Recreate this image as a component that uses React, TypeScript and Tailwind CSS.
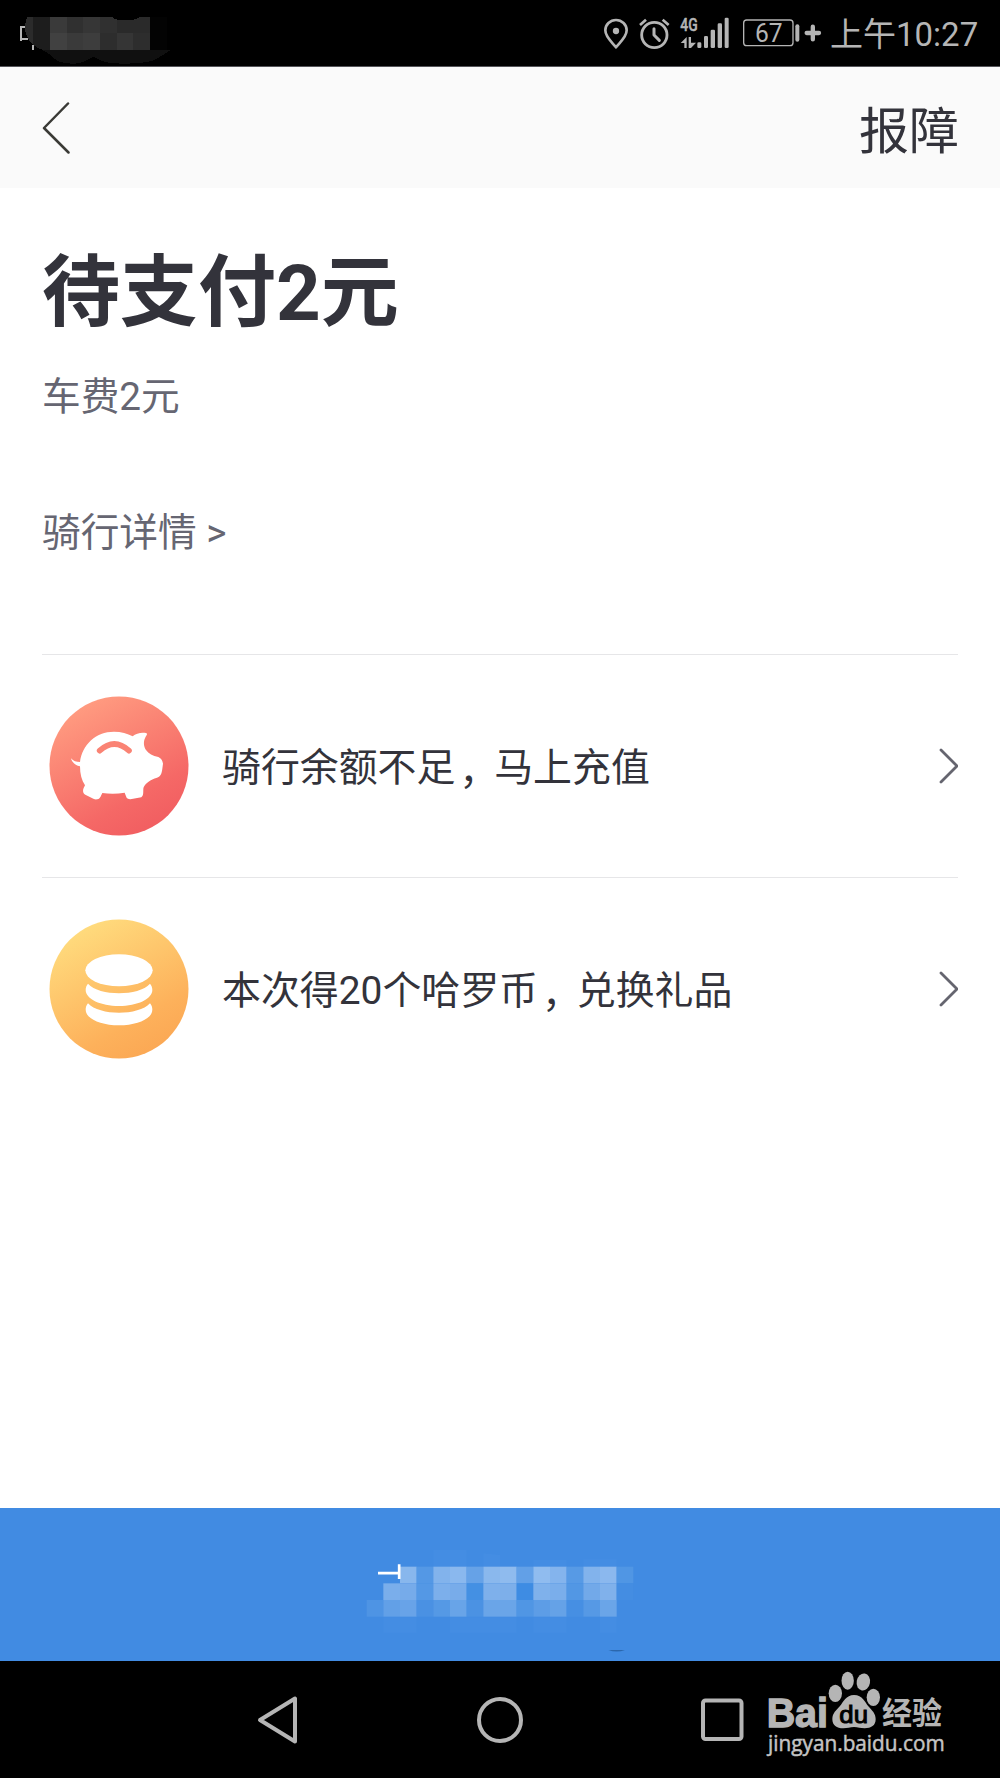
import React from 'react';

type Cell = [number, number, string];

// [column, row, colour] of the masked button label
const maskCells: Cell[] = [
  [0, 2, '#4e94e4'],
  [1, 1, '#7aaeeb'], [1, 2, '#62a0e7'],
  [2, 0, '#88b7ed'], [2, 1, '#76abea'], [2, 2, '#68a3e8'],
  [3, 0, '#5498e5'], [3, 1, '#5498e5'], [3, 2, '#4a91e3'],
  [4, 0, '#82b3ec'], [4, 1, '#7cafeb'], [4, 2, '#5599e5'],
  [5, 0, '#8ab8ee'], [5, 1, '#78acea'], [5, 2, '#68a4e8'],
  [6, 0, '#66a2e7'], [6, 1, '#4490e3'], [6, 2, '#4b92e3'],
  [7, 0, '#8ab8ed'], [7, 1, '#7eb0eb'], [7, 2, '#6aa5e8'],
  [8, 0, '#8fbbee'], [8, 1, '#7dafea'], [8, 2, '#6aa5e8'],
  [9, 0, '#62a0e7'], [9, 1, '#3e8ce3'], [9, 2, '#5096e4'],
  [10, 0, '#90bcef'], [10, 1, '#7fb1eb'], [10, 2, '#5d9de6'],
  [11, 0, '#84b4ed'], [11, 1, '#7aaeeb'], [11, 2, '#65a2e7'],
  [12, 0, '#579ae5'], [12, 1, '#5297e4'], [12, 2, '#468fe3'],
  [13, 0, '#82b3ec'], [13, 1, '#72a9e9'], [13, 2, '#5699e5'],
  [14, 0, '#8bb8ee'], [14, 1, '#80b1eb'], [14, 2, '#6aa5e8'],
  [15, 0, '#5096e4'], [15, 1, '#448de2'],
];

const CarrierMask = () => (
  <svg className="h-[66px] w-[180px]" viewBox="0 0 540 198" shapeRendering="crispEdges">
    <path d="M64 124V80h14M64 117h20M100 134v16" fill="none" stroke="#b5b5b5" strokeWidth="6" />
    <path d="M128 150h384q-45 30-60 34q-60 12-127 4q-30-8-45-18q-20 13-40 19q-35 6-65-5q-15-8-25-20z" fill="#101010" />
    <path d="M84 50h16v84q-25-22-25-54q1-20 9-30z" fill="#2b2b2b" />
    <path d="M100 50h50v100h-22q-20-8-28-16z" fill="#1d1d1d" />
    <path d="M150 50h50v50h-50z" fill="#3a3a3a" />
    <path d="M200 50h50v50h-50z" fill="#303030" />
    <path d="M250 50h50v50h-50z" fill="#363636" />
    <path d="M300 50h34q8 8 22 10h44v40H300z" fill="#303030" />
    <path d="M350 59h50q12-1 20-9h30v50H350z" fill="#2a2a2a" />
    <path d="M150 100h50v50h-50z" fill="#414141" />
    <path d="M200 100h50v50h-50z" fill="#3a3a3a" />
    <path d="M250 100h50v50h-50z" fill="#3d3d3d" />
    <path d="M300 100h50v50h-50z" fill="#2d2d2d" />
    <path d="M350 100h50v50h-50z" fill="#353535" />
    <path d="M400 100h50v50h-50z" fill="#2d2d2d" />
    <path d="M450 50h50v100h-50z" fill="#030303" />
  </svg>
);

const StatusIcons = () => (
  <svg className="h-[66px] w-[240px]" viewBox="0 0 720 198" fill="none" stroke="#b5b5b5">
    {/* location */}
    <path d="M78 142C68 128 46 112 46 91a32 31 0 0 1 64 0c0 21-22 37-32 51z" strokeWidth="8" strokeLinejoin="round" />
    <circle cx="78" cy="93" r="9.5" fill="#b5b5b5" stroke="none" />
    {/* alarm */}
    <circle cx="193" cy="105" r="38" strokeWidth="8.5" />
    <path d="M192 86v19l16 16" strokeWidth="9" strokeLinecap="round" strokeLinejoin="round" />
    <path d="M150 75l18-16M236 75l-18-16" strokeWidth="8" />
    {/* network */}
    <text x="271" y="94" fontSize="57" textLength="52" lengthAdjust="spacingAndGlyphs" fill="#b5b5b5" stroke="#b5b5b5" strokeWidth="1.5" className="font-['Roboto',sans-serif] font-medium">4G</text>
    <g fill="#b5b5b5" stroke="none">
      <path d="M272 129l18-18v33h-7v-15zM296 111h7v17h15l-15 16h-7z" />
      <rect x="322" y="127" width="12" height="17" rx="4" />
      <rect x="342" y="108" width="12" height="36" rx="4" />
      <rect x="362" y="89" width="13" height="55" rx="4" />
      <rect x="383" y="70" width="13" height="74" rx="4" />
      <rect x="404" y="53" width="12" height="91" rx="4" />
    </g>
    {/* battery */}
    <rect x="461" y="60" width="148" height="77" rx="9" strokeWidth="4" />
    <text x="495" y="125" fontSize="75" textLength="83" lengthAdjust="spacingAndGlyphs" fill="#b5b5b5" stroke="none" className="font-['Roboto',sans-serif]">67</text>
    <path d="M622 79v40" strokeWidth="12" strokeLinecap="round" />
    <path d="M650 99h37M668.500 80v38" strokeWidth="13" strokeLinecap="round" />
  </svg>
);

const StatusBar = () => (
  <div className="flex h-[66px] items-center justify-between bg-black">
    <CarrierMask />
    <div className="flex h-[66px] items-center">
      <StatusIcons />
      <span className="mr-[22px] w-[148px] pt-1 text-[33px] leading-[66px] whitespace-nowrap text-[#b5b5b5]">上午10:27</span>
    </div>
  </div>
);

const PiggyIcon = () => (
  <svg className="h-[140px] w-[140px] shrink-0" viewBox="0 0 420 420">
    <defs>
      <linearGradient id="coral" x1="0.2" y1="0.08" x2="0.7" y2="0.98">
        <stop offset="0" stopColor="#ff9b80" />
        <stop offset="0.75" stopColor="#f56866" />
        <stop offset="1" stopColor="#f15e61" />
      </linearGradient>
    </defs>
    <circle cx="210" cy="210" r="208.500" fill="url(#coral)" />
    <path
      d="M66 187c7 9 16 11 27 11c6-51 47-91 102-91c22 0 40 5 56 14c10-10 28-13 40-10c6 2 2 7-1 11c-9 16-5 32 1 40c8 11 20 18 37 21c9 4 13 12 14 20l-2 15c-2 18-7 23-16 27c-20 6-34 16-40 29c-3 8 2 24-7 30l-33 6c-7 0-11-2-13-9l-4-11q-33 6-67 1c-5 10-7 18-15 19c-5 1-8 0-12-2l-24-12c-8-4-8-14-5-20l4-8c-10-15-15-34-15-57c-14-3-24-12-27-24z"
      fill="#fff"
    />
    <path d="M152 164q44-40 88 0" fill="none" stroke="#fa8374" strokeWidth="17" strokeLinecap="round" />
  </svg>
);

const CoinsIcon = () => (
  <svg className="h-[140px] w-[140px] shrink-0" viewBox="0 0 420 420">
    <defs>
      <linearGradient id="amber" x1="0.2" y1="0.08" x2="0.7" y2="0.98">
        <stop offset="0" stopColor="#ffdb7d" />
        <stop offset="0.75" stopColor="#fdb15b" />
        <stop offset="1" stopColor="#fba854" />
      </linearGradient>
    </defs>
    <circle cx="210" cy="210" r="208.500" fill="url(#amber)" />
    <g fill="#fff">
      <ellipse cx="210" cy="154" rx="101" ry="48" />
      <path d="M117 194c34 38 152 38 186 0c5 6 7 12 7 19c0 27-45 48-100 48s-100-21-100-48c0-7 2-13 7-19z" />
      <path d="M117 253c34 38 152 38 186 0c5 6 7 12 7 19c0 27-45 47-100 47s-100-20-100-47c0-7 2-13 7-19z" />
    </g>
  </svg>
);

const Chevron = () => (
  <svg className="h-9 w-5" viewBox="0 0 20 36" fill="none" stroke="#65656f" strokeWidth="2.800" strokeLinecap="round" strokeLinejoin="round">
    <path d="M3 2L19 18L3 34" />
  </svg>
);

const BaiduMark = () => (
  <svg className="absolute top-[9px] left-[760px] h-[96px] w-[190px] overflow-visible" viewBox="0 0 570 288" fill="#b5b5b5">
    <text x="20" y="170" fontSize="120" textLength="184" lengthAdjust="spacingAndGlyphs" stroke="#b5b5b5" strokeWidth="4" className="font-['Liberation_Sans',sans-serif] font-bold">Bai</text>
    <ellipse cx="226" cy="70" rx="20" ry="26" />
    <ellipse cx="263" cy="32" rx="18.500" ry="27" />
    <ellipse cx="310" cy="36" rx="20" ry="26" transform="rotate(10 310 36)" />
    <ellipse cx="340" cy="82" rx="20" ry="26" />
    <path d="M282 75c26 0 33 22 43 34c11 13 22 21 22 39c0 19-14 27-33 27c-12 0-20-4-32-4s-20 4-32 4c-20 0-33-9-33-28c0-18 12-26 23-39c10-12 18-33 42-33z" />
    <text x="238" y="158" fontSize="74" textLength="86" lengthAdjust="spacingAndGlyphs" fill="#000" className="font-['Liberation_Sans',sans-serif]" stroke="#000" strokeWidth="3">du</text>
    <text x="366" y="162" fontSize="92" textLength="180" lengthAdjust="spacingAndGlyphs" className="font-['Noto_Sans_CJK_SC',sans-serif] font-bold">经验</text>
    <text x="24" y="243" fontSize="66" textLength="530" lengthAdjust="spacingAndGlyphs" fill="#c4c4c4" stroke="#c4c4c4" strokeWidth="1.500" className="font-['Open_Sans',sans-serif]">jingyan.baidu.com</text>
  </svg>
);

const rows = [
  { before: '骑行余额不足', after: '马上充值', icon: PiggyIcon },
  { before: '本次得20个哈罗币', after: '兑换礼品', icon: CoinsIcon },
];

const App: React.FC = () => {
  return (
    <div className="flex h-[1778px] w-[1000px] flex-col overflow-hidden bg-white font-['Roboto','Noto_Sans_CJK_SC',sans-serif] text-[#33333b]">
      <StatusBar />

      {/* Header */}
      <header className="flex h-[122px] items-center justify-between border-t border-[#55555a] bg-[#fafafa] pr-[41px] pl-[42px]">
        <svg className="h-[54px] w-7" viewBox="0 0 28 54" fill="none" stroke="#3a3a36" strokeWidth="2.500" strokeLinecap="round" strokeLinejoin="round">
          <path d="M26 2.500L2 27L26.500 51.500" />
        </svg>
        <span className="pt-2 text-[50px] leading-[60px]">报障</span>
      </header>

      {/* Fee summary */}
      <section className="flex h-[466px] flex-col px-[42px] pt-[56px]">
        <h1 className="text-[78px] leading-[100px] font-bold">待支付2元</h1>
        <p className="mt-[23px] text-[38.7px] leading-[60px] text-[#666672]">车费2元</p>
        <p className="mt-[76px] text-[38.7px] leading-[60px] text-[#666672]">骑行详情 &gt;</p>
      </section>

      {/* Actions */}
      <ul className="mx-[42px]">
        {rows.map(({ before, after, icon: Icon }) => (
          <li key={after} className="flex h-[223px] items-center border-t border-[#e6e6e8] pl-[7px]">
            <Icon />
            <span className="ml-[33px] flex-1 pt-1 text-[38.9px] leading-[60px]">
              {before}
              <span className="relative top-[3px] left-[4px]">，</span>
              {after}
            </span>
            <Chevron />
          </li>
        ))}
      </ul>

      {/* Pay button */}
      <button className="mt-auto flex h-[153px] shrink-0 justify-center bg-[#418be2]">
        <svg className="h-[153px] w-[300px]" viewBox="0 -66 900 459">
          <path d="M250 60h100v50H250zM400 70l50 5v35h-50zM550 90h100v20H550zM700 88h100v22H700zM100 262h100v46H100zM300 262h200v46H300zM550 262h100v46H550zM750 262h50v46h-50z" fill="#448de3" />
          {maskCells.map(([col, row, fill]) => (
            <rect key={`${col}-${row}`} x={50 + col * 50} y={110 + row * 50} width="50" height="50" fill={fill} />
          ))}
          <path d="M84 129.500h61M147.500 103v44" stroke="#fff" strokeWidth="8" />
          <path d="M775 360h50q-25 9-50 0z" fill="#2b67ad" />
        </svg>
      </button>

      {/* System navigation */}
      <nav className="relative flex h-[117px] shrink-0 items-center bg-black pl-[256px]">
        <svg className="h-[50px] w-[42px]" viewBox="0 0 42 50" fill="none" stroke="#b5b5b5" strokeWidth="4" strokeLinejoin="round">
          <path d="M4 25L39 3.500V46.500z" />
        </svg>
        <svg className="ml-[177px] h-[50px] w-[50px]" viewBox="0 0 50 50" fill="none" stroke="#b5b5b5" strokeWidth="4">
          <circle cx="25" cy="25" r="21" />
        </svg>
        <svg className="ml-[172px] h-[50px] w-[50px]" viewBox="0 0 50 50" fill="none" stroke="#b5b5b5" strokeWidth="4">
          <rect x="6" y="5.500" width="38.500" height="38.500" rx="2.500" />
        </svg>
        <BaiduMark />
      </nav>
    </div>
  );
};

export default App;
